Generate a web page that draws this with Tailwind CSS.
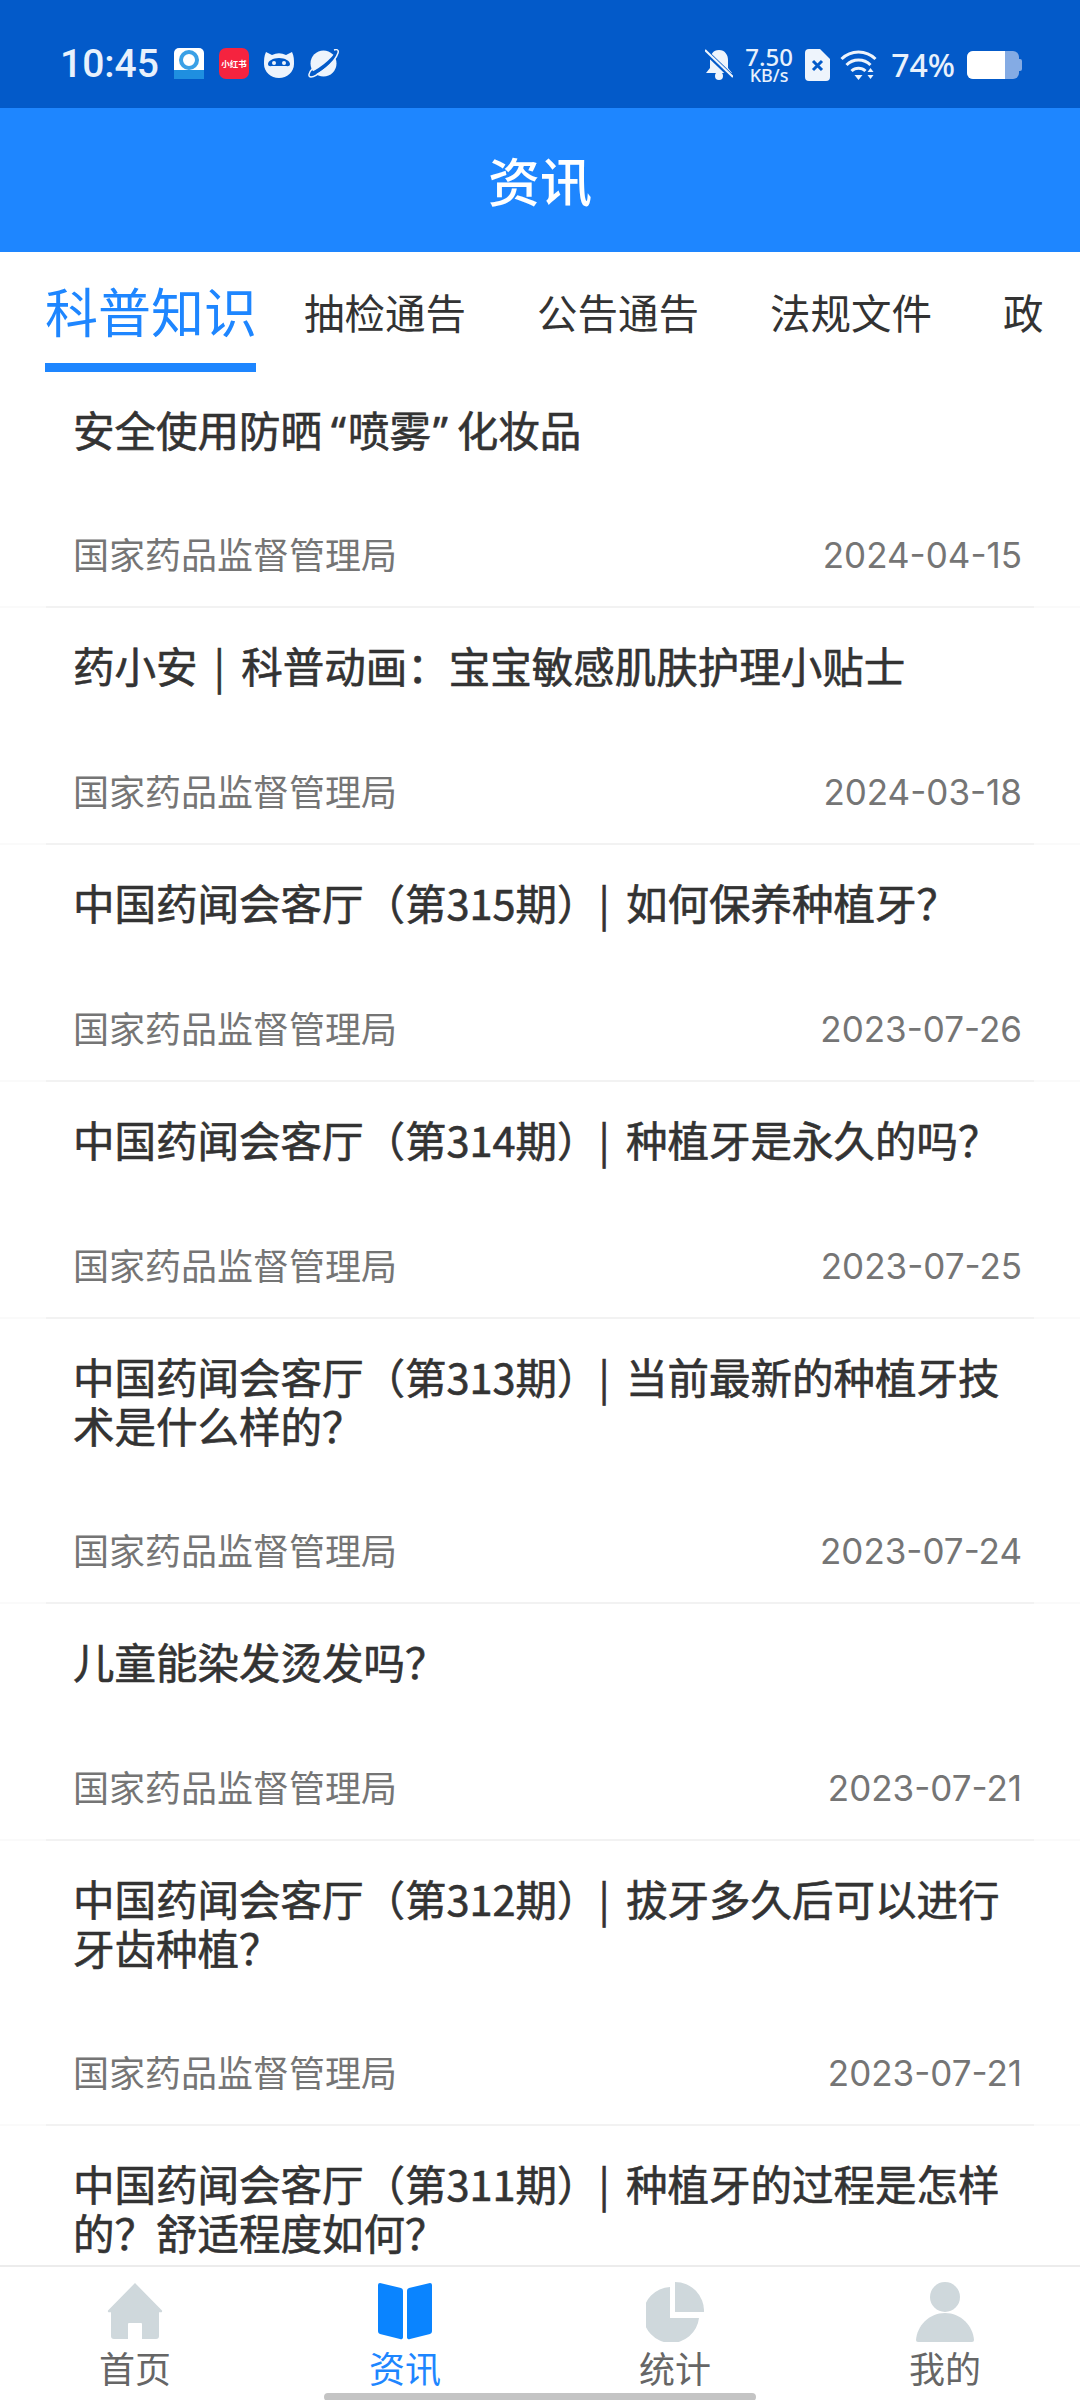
<!DOCTYPE html>
<html lang="zh-CN">
<head>
    <meta charset="UTF-8">
    <meta name="viewport" content="width=device-width, initial-scale=1.0">
    <title>资讯</title>
    <script src="https://cdn.jsdelivr.net/npm/@tailwindcss/browser@4"></script>
</head>
<body class="bg-white font-['Noto_Sans_CJK_SC','Noto_Sans',sans-serif]">
<div class="relative w-[1080px] h-[2400px] flex flex-col overflow-hidden">

    <!-- Status bar -->
    <div class="h-[108px] shrink-0 bg-[#035ac9] flex items-center justify-between pl-[60px] pr-[58px] pt-[19px] text-[#e8f1fc]">
        <div class="flex items-center">
            <span class="font-['Roboto',sans-serif] font-medium text-[39px] leading-none w-[114px] mt-[2px]">10:45</span>
            <svg class="w-[30px] h-[31px]" viewBox="0 0 30 31"><rect width="30" height="31" rx="5" fill="#fff"/><circle cx="15" cy="12" r="8" fill="none" stroke="#3aa0e6" stroke-width="4"/><rect y="22" width="30" height="9" fill="#1f8fe0"/></svg>
            <span class="ml-[15px] w-[30px] h-[31px] rounded-[7px] bg-[#f5233f] text-white text-[8.5px] font-bold leading-[31px] text-center whitespace-nowrap overflow-hidden">小红书</span>
            <svg class="ml-[15px] w-[30px] h-[28px]" viewBox="0 0 30 28"><path d="M2 2l6 3a15 15 0 0 1 14 0l6-3c2 4 2 8 2 12 0 8-7 14-15 14S0 22 0 14C0 10 0 6 2 2z" fill="#eef4fc"/><path d="M15 8c6 0 11 3 11 6s-3 2-5 2H9c-2 0-5 1-5-2s5-6 11-6z" fill="#035ac9"/><circle cx="10" cy="13" r="2" fill="#eef4fc"/><circle cx="20" cy="13" r="2" fill="#eef4fc"/></svg>
            <svg class="ml-[14px] w-[31px] h-[29px]" viewBox="0 0 31 29"><circle cx="15.5" cy="14.500" r="13" fill="#eef4fc"/><path d="M1 26C8 24 26 12 30 2" fill="none" stroke="#035ac9" stroke-width="4"/><path d="M5 19C0 24 0 28 3 28c5 0 24-14 27-24 1-3-1-4-4-3" fill="none" stroke="#eef4fc" stroke-width="1.500"/></svg>
        </div>
        <div class="flex items-center pt-[3px]">
            <svg class="w-[28px] h-[32px]" viewBox="0 0 28 32"><path d="M14 1c6 0 9 5 9 10v8l4 5H1l4-5v-8C5 6 8 1 14 1z" fill="#eef4fc"/><circle cx="14" cy="27" r="4" fill="#eef4fc"/><path d="M0 2l28 27" stroke="#035ac9" stroke-width="5"/><path d="M0 1l28 27" stroke="#eef4fc" stroke-width="2"/></svg>
            <div class="ml-[13px] w-[46px] flex flex-col items-center font-['Noto_Sans',sans-serif] font-medium">
                <span class="text-[24px] leading-[21px]">7.50</span>
                <span class="text-[18px] leading-[17px]">KB/s</span>
            </div>
            <svg class="ml-[13px] w-[25px] h-[32px]" viewBox="0 0 25 32"><path d="M4 0h11l10 10v18a4 4 0 0 1-4 4H4a4 4 0 0 1-4-4V4a4 4 0 0 1 4-4z" fill="#eef4fc"/><path d="M8 12l9 9M17 12l-9 9" stroke="#035ac9" stroke-width="3"/></svg>
            <svg class="ml-[10px] w-[38px] h-[30px]" viewBox="0 0 37 30"><path d="M1 9a24 24 0 0 1 34 0M6 15a17 17 0 0 1 24 0M11 21a10 10 0 0 1 14 0" fill="none" stroke="#eef4fc" stroke-width="3"/><path d="M14 25h8l-4 5z" fill="#eef4fc"/><path d="M30 18l3 4h-6zM27 25h6l-3 4z" fill="#eef4fc"/></svg>
            <span class="ml-[13px] font-['Noto_Sans',sans-serif] font-medium text-[32px] leading-none">74%</span>
            <div class="ml-[12px] flex items-center">
                <div class="w-[52px] h-[28px] rounded-[6px] bg-[#84abe4] overflow-hidden"><div class="w-[38px] h-full bg-white"></div></div>
                <div class="w-[3px] h-[12px] rounded-r-[2px] bg-[#84abe4]"></div>
            </div>
        </div>
    </div>

    <!-- Header -->
    <div class="h-[144px] shrink-0 bg-[#1e86ff] flex items-center justify-center">
        <h1 class="text-white text-[52px] font-medium">资讯</h1>
    </div>

    <!-- Tabs -->
    <div class="h-[120px] shrink-0 flex items-start pl-[45px] overflow-hidden whitespace-nowrap text-[#333]">
        <div class="w-[211px] h-[120px] shrink-0 border-b-[9px] border-[#1e86ff] text-[#1e86ff] text-[53px] leading-[116px]">科普知识</div>
        <div class="ml-[48px] text-[40.5px] leading-[120px] shrink-0">抽检通告</div>
        <div class="ml-[71px] text-[40.5px] leading-[120px] shrink-0">公告通告</div>
        <div class="ml-[71px] text-[40.5px] leading-[120px] shrink-0">法规文件</div>
        <div class="ml-[71px] text-[40.5px] leading-[120px] shrink-0">政</div>
    </div>

    <!-- News list -->
    <div class="flex-1 min-h-0 overflow-hidden">
        <article class="h-[234px] pl-[73px] pr-[58px] flex flex-col justify-between">
            <h2 class="text-[41.5px] leading-[49px] [-webkit-text-stroke:0.6px_#333] [word-spacing:7px] text-[#333] pt-[33px]">安全使用防晒<span class="pl-[9px] pr-[2px] font-['Noto_Sans',sans-serif]">“</span>喷雾<span class="pl-[2px] pr-[9px] font-['Noto_Sans',sans-serif]">”</span>化妆品</h2>
            <div class="flex justify-between items-center text-[#757575] pb-[29px]"><span class="text-[36px] leading-[44px]">国家药品监督管理局</span><span class="font-['Inter',sans-serif] text-[35px] leading-[44px] mt-[5px]">2024-04-15</span></div>
        </article>
        <div class="h-[2px] bg-[#fafafa]"><div class="h-full mx-[46px] bg-[#f2f2f2]"></div></div>
        <article class="h-[235px] pl-[73px] pr-[58px] flex flex-col justify-between">
            <h2 class="text-[41.5px] leading-[49px] [-webkit-text-stroke:0.6px_#333] [word-spacing:7px] text-[#333] pt-[33px]">药小安 | 科普动画&#xFF1A;宝宝敏感肌肤护理小贴士</h2>
            <div class="flex justify-between items-center text-[#757575] pb-[29px]"><span class="text-[36px] leading-[44px]">国家药品监督管理局</span><span class="font-['Inter',sans-serif] text-[35px] leading-[44px] mt-[5px]">2024-03-18</span></div>
        </article>
        <div class="h-[2px] bg-[#fafafa]"><div class="h-full mx-[46px] bg-[#f2f2f2]"></div></div>
        <article class="h-[235px] pl-[73px] pr-[58px] flex flex-col justify-between">
            <h2 class="text-[41.5px] leading-[49px] [-webkit-text-stroke:0.6px_#333] [word-spacing:7px] text-[#333] pt-[33px]">中国药闻会客厅&#xFF08;第315期&#xFF09;| 如何保养种植牙&#xFF1F;</h2>
            <div class="flex justify-between items-center text-[#757575] pb-[29px]"><span class="text-[36px] leading-[44px]">国家药品监督管理局</span><span class="font-['Inter',sans-serif] text-[35px] leading-[44px] mt-[5px]">2023-07-26</span></div>
        </article>
        <div class="h-[2px] bg-[#fafafa]"><div class="h-full mx-[46px] bg-[#f2f2f2]"></div></div>
        <article class="h-[235px] pl-[73px] pr-[58px] flex flex-col justify-between">
            <h2 class="text-[41.5px] leading-[49px] [-webkit-text-stroke:0.6px_#333] [word-spacing:7px] text-[#333] pt-[33px]">中国药闻会客厅&#xFF08;第314期&#xFF09;| 种植牙是永久的吗&#xFF1F;</h2>
            <div class="flex justify-between items-center text-[#757575] pb-[29px]"><span class="text-[36px] leading-[44px]">国家药品监督管理局</span><span class="font-['Inter',sans-serif] text-[35px] leading-[44px] mt-[5px]">2023-07-25</span></div>
        </article>
        <div class="h-[2px] bg-[#fafafa]"><div class="h-full mx-[46px] bg-[#f2f2f2]"></div></div>
        <article class="h-[283px] pl-[73px] pr-[58px] flex flex-col justify-between">
            <h2 class="text-[41.5px] leading-[49px] [-webkit-text-stroke:0.6px_#333] [word-spacing:7px] text-[#333] pt-[33px]">中国药闻会客厅&#xFF08;第313期&#xFF09;| 当前最新的种植牙技术是什么样的&#xFF1F;</h2>
            <div class="flex justify-between items-center text-[#757575] pb-[29px]"><span class="text-[36px] leading-[44px]">国家药品监督管理局</span><span class="font-['Inter',sans-serif] text-[35px] leading-[44px] mt-[5px]">2023-07-24</span></div>
        </article>
        <div class="h-[2px] bg-[#fafafa]"><div class="h-full mx-[46px] bg-[#f2f2f2]"></div></div>
        <article class="h-[235px] pl-[73px] pr-[58px] flex flex-col justify-between">
            <h2 class="text-[41.5px] leading-[49px] [-webkit-text-stroke:0.6px_#333] [word-spacing:7px] text-[#333] pt-[33px]">儿童能染发烫发吗&#xFF1F;</h2>
            <div class="flex justify-between items-center text-[#757575] pb-[29px]"><span class="text-[36px] leading-[44px]">国家药品监督管理局</span><span class="font-['Inter',sans-serif] text-[35px] leading-[44px] mt-[5px]">2023-07-21</span></div>
        </article>
        <div class="h-[2px] bg-[#fafafa]"><div class="h-full mx-[46px] bg-[#f2f2f2]"></div></div>
        <article class="h-[283px] pl-[73px] pr-[58px] flex flex-col justify-between">
            <h2 class="text-[41.5px] leading-[49px] [-webkit-text-stroke:0.6px_#333] [word-spacing:7px] text-[#333] pt-[33px]">中国药闻会客厅&#xFF08;第312期&#xFF09;| 拔牙多久后可以进行牙齿种植&#xFF1F;</h2>
            <div class="flex justify-between items-center text-[#757575] pb-[29px]"><span class="text-[36px] leading-[44px]">国家药品监督管理局</span><span class="font-['Inter',sans-serif] text-[35px] leading-[44px] mt-[5px]">2023-07-21</span></div>
        </article>
        <div class="h-[2px] bg-[#fafafa]"><div class="h-full mx-[46px] bg-[#f2f2f2]"></div></div>
        <article class="h-[283px] pl-[73px] pr-[58px] flex flex-col justify-between">
            <h2 class="text-[41.5px] leading-[49px] [-webkit-text-stroke:0.6px_#333] [word-spacing:7px] text-[#333] pt-[33px]">中国药闻会客厅&#xFF08;第311期&#xFF09;| 种植牙的过程是怎样的&#xFF1F;舒适程度如何&#xFF1F;</h2>
        </article>
    </div>

    <!-- Bottom nav -->
    <nav class="h-[135px] shrink-0 border-t-2 border-[#ececec] grid grid-cols-4 bg-white text-[36px] text-[#666]">
        <div class="flex flex-col items-center pt-[15px]">
            <svg class="w-[56px] h-[58px]" viewBox="0 0 56 58"><path d="M28 1 55 28.5a1.2 1.2 0 0 1-1 1.8H52V54a3 3 0 0 1-3 3H35V42a1 1 0 0 0-1-1H22a1 1 0 0 0-1 1V57H7a3 3 0 0 1-3-3V30.300H2a1.200 1.200 0 0 1-1-1.800z" fill="#cfd8dc"/></svg>
            <span class="leading-[44px] mt-[5px]">首页</span>
        </div>
        <div class="flex flex-col items-center pt-[15px] text-[#1e86ff]">
            <svg class="w-[56px] h-[58px]" viewBox="0 0 56 58"><path d="M3 1 24 6a3 3 0 0 1 2 3v46a2 2 0 0 1-3 2L3 52a3 3 0 0 1-2-3V3a2 2 0 0 1 2-2zM53 1 32 6a3 3 0 0 0-2 3v46a2 2 0 0 0 3 2l20-5a3 3 0 0 0 2-3V3a2 2 0 0 0-2-2z" fill="#0a84ff"/></svg>
            <span class="leading-[44px] mt-[5px]">资讯</span>
        </div>
        <div class="flex flex-col items-center pt-[15px]">
            <svg class="w-[58px] h-[60px]" viewBox="0 0 58 60"><path d="M24 5v31h29A28 28 0 1 1 24 5z" fill="#cfd8dc"/><path d="M29 0a29 29 0 0 1 29 30H29z" fill="#cfd8dc"/></svg>
            <span class="leading-[44px] mt-[3px]">统计</span>
        </div>
        <div class="flex flex-col items-center pt-[15px]">
            <svg class="w-[58px] h-[60px]" viewBox="0 0 58 60"><circle cx="29" cy="15" r="15" fill="#cfd8dc"/><path d="M29 31c16 0 28 13 29 27a2 2 0 0 1-2 2H2a2 2 0 0 1-2-2C1 44 13 31 29 31z" fill="#cfd8dc"/></svg>
            <span class="leading-[44px] mt-[3px]">我的</span>
        </div>
    </nav>

    <!-- Gesture bar -->
    <div class="absolute left-[324px] bottom-[-1px] w-[432px] h-[8px] rounded-full bg-[#c4c4c4]"></div>
</div>
</body>
</html>
